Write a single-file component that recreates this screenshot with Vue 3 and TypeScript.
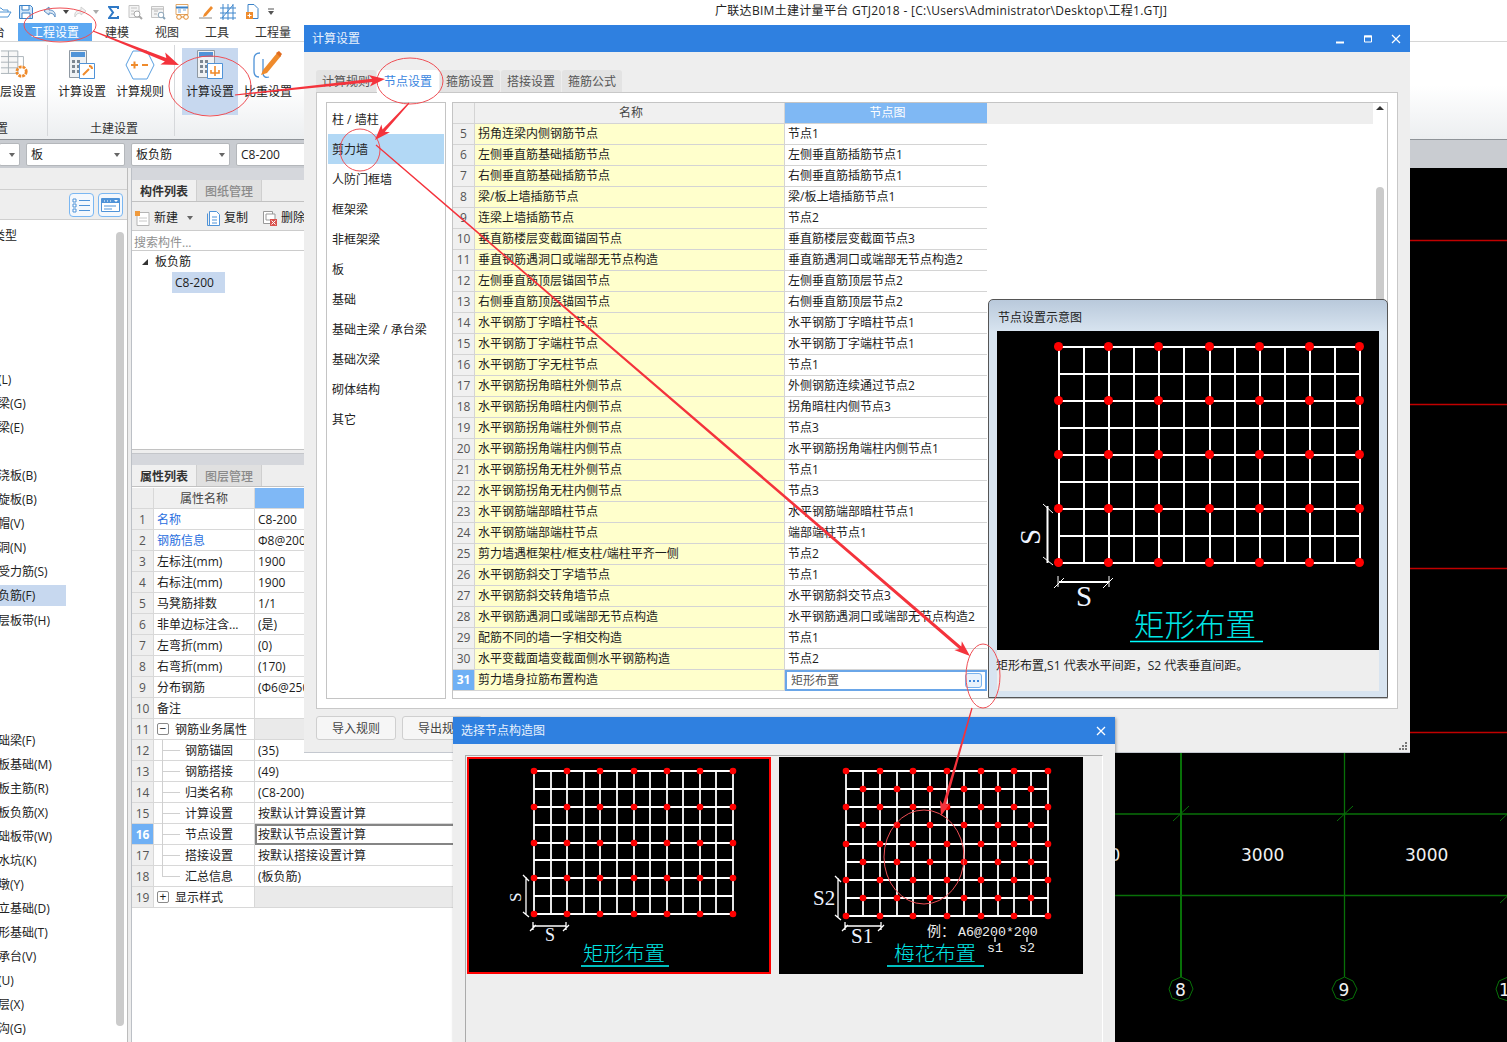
<script setup lang="ts">
interface NodeRow { no: number; name: string; value: string }
interface PropRow { no: number; name: string; value: string; level: number; link?: boolean; box?: string; active?: boolean; last?: boolean }

const tabsTop = ['建模', '视图', '工具', '工程量']
const navRows = [
  '类型', '', '', '', '', '', '(L)', '梁(G)', '梁(E)', '', '浇板(B)', '旋板(B)', '帽(V)', '洞(N)', '受力筋(S)', '负筋(F)', '层板带(H)',
  '', '', '', '', '础梁(F)', '板基础(M)', '板主筋(R)', '板负筋(X)', '础板带(W)', '水坑(K)', '墩(Y)', '立基础(D)', '形基础(T)', '承台(V)', '(U)', '层(X)', '沟(G)',
]
const sideItems = ['柱 / 墙柱', '剪力墙', '人防门框墙', '框架梁', '非框架梁', '板', '基础', '基础主梁 / 承台梁', '基础次梁', '砌体结构', '其它']
const dialogTabs = ['计算规则', '节点设置', '箍筋设置', '搭接设置', '箍筋公式']

const nodeRows: NodeRow[] = [
  { no: 5, name: '拐角连梁内侧钢筋节点', value: '节点1' },
  { no: 6, name: '左侧垂直筋基础插筋节点', value: '左侧垂直筋插筋节点1' },
  { no: 7, name: '右侧垂直筋基础插筋节点', value: '右侧垂直筋插筋节点1' },
  { no: 8, name: '梁/板上墙插筋节点', value: '梁/板上墙插筋节点1' },
  { no: 9, name: '连梁上墙插筋节点', value: '节点2' },
  { no: 10, name: '垂直筋楼层变截面锚固节点', value: '垂直筋楼层变截面节点3' },
  { no: 11, name: '垂直钢筋遇洞口或端部无节点构造', value: '垂直筋遇洞口或端部无节点构造2' },
  { no: 12, name: '左侧垂直筋顶层锚固节点', value: '左侧垂直筋顶层节点2' },
  { no: 13, name: '右侧垂直筋顶层锚固节点', value: '右侧垂直筋顶层节点2' },
  { no: 14, name: '水平钢筋丁字暗柱节点', value: '水平钢筋丁字暗柱节点1' },
  { no: 15, name: '水平钢筋丁字端柱节点', value: '水平钢筋丁字端柱节点1' },
  { no: 16, name: '水平钢筋丁字无柱节点', value: '节点1' },
  { no: 17, name: '水平钢筋拐角暗柱外侧节点', value: '外侧钢筋连续通过节点2' },
  { no: 18, name: '水平钢筋拐角暗柱内侧节点', value: '拐角暗柱内侧节点3' },
  { no: 19, name: '水平钢筋拐角端柱外侧节点', value: '节点3' },
  { no: 20, name: '水平钢筋拐角端柱内侧节点', value: '水平钢筋拐角端柱内侧节点1' },
  { no: 21, name: '水平钢筋拐角无柱外侧节点', value: '节点1' },
  { no: 22, name: '水平钢筋拐角无柱内侧节点', value: '节点3' },
  { no: 23, name: '水平钢筋端部暗柱节点', value: '水平钢筋端部暗柱节点1' },
  { no: 24, name: '水平钢筋端部端柱节点', value: '端部端柱节点1' },
  { no: 25, name: '剪力墙遇框架柱/框支柱/端柱平齐一侧', value: '节点2' },
  { no: 26, name: '水平钢筋斜交丁字墙节点', value: '节点1' },
  { no: 27, name: '水平钢筋斜交转角墙节点', value: '水平钢筋斜交节点3' },
  { no: 28, name: '水平钢筋遇洞口或端部无节点构造', value: '水平钢筋遇洞口或端部无节点构造2' },
  { no: 29, name: '配筋不同的墙一字相交构造', value: '节点1' },
  { no: 30, name: '水平变截面墙变截面侧水平钢筋构造', value: '节点2' },
]

const propRows: PropRow[] = [
  { no: 1, name: '名称', value: 'C8-200', level: 0, link: true },
  { no: 2, name: '钢筋信息', value: 'Φ8@200', level: 0, link: true },
  { no: 3, name: '左标注(mm)', value: '1900', level: 0 },
  { no: 4, name: '右标注(mm)', value: '1900', level: 0 },
  { no: 5, name: '马凳筋排数', value: '1/1', level: 0 },
  { no: 6, name: '非单边标注含...', value: '(是)', level: 0 },
  { no: 7, name: '左弯折(mm)', value: '(0)', level: 0 },
  { no: 8, name: '右弯折(mm)', value: '(170)', level: 0 },
  { no: 9, name: '分布钢筋', value: '(Φ6@250)', level: 0 },
  { no: 10, name: '备注', value: '', level: 0 },
  { no: 11, name: '钢筋业务属性', value: '', level: 0, box: '−' },
  { no: 12, name: '钢筋锚固', value: '(35)', level: 1 },
  { no: 13, name: '钢筋搭接', value: '(49)', level: 1 },
  { no: 14, name: '归类名称', value: '(C8-200)', level: 1 },
  { no: 15, name: '计算设置', value: '按默认计算设置计算', level: 1 },
  { no: 16, name: '节点设置', value: '按默认节点设置计算', level: 1, active: true },
  { no: 17, name: '搭接设置', value: '按默认搭接设置计算', level: 1 },
  { no: 18, name: '汇总信息', value: '(板负筋)', level: 1, last: true },
  { no: 19, name: '显示样式', value: '', level: 0, box: '+' },
]

function makeGrid(x0: number, x1: number, y0: number, y1: number, plum: boolean) {
  const xs = Array.from({ length: 13 }, (_, i) => Math.round(x0 + ((x1 - x0) * i) / 12))
  const ys = Array.from({ length: 9 }, (_, i) => Math.round(y0 + ((y1 - y0) * i) / 8))
  const dots: [number, number][] = []
  ys.forEach((y, r) => {
    xs.forEach((x, c) => {
      if (r % 2 === 0 && c % 2 === 0) dots.push([x, y])
      if (plum && r % 2 === 1 && c % 2 === 1) dots.push([x, y])
    })
  })
  return { xs, ys, dots, x0, x1, y0, y1 }
}

const bigGrid = makeGrid(1059, 1360, 347, 563, false)
const rectGrid = makeGrid(534, 733, 771, 914, false)
const plumGrid = makeGrid(846, 1048, 771, 916, true)

// tapered screen-capture arrows, page coordinates
function arrowPoints(x1: number, y1: number, x2: number, y2: number, w: number) {
  const len = Math.hypot(x2 - x1, y2 - y1)
  const ux = (x2 - x1) / len
  const uy = (y2 - y1) / len
  const nx = -uy
  const ny = ux
  const head = w * 4
  const bx = x2 - ux * head
  const by = y2 - uy * head
  const p = (x: number, y: number) => `${x.toFixed(1)},${y.toFixed(1)}`
  return [
    p(x1 + nx * 0.6, y1 + ny * 0.6),
    p(bx + (nx * w) / 2, by + (ny * w) / 2),
    p(bx - ux * 3 + nx * w * 1.8, by - uy * 3 + ny * w * 1.8),
    p(x2, y2),
    p(bx - ux * 3 - nx * w * 1.8, by - uy * 3 - ny * w * 1.8),
    p(bx - (nx * w) / 2, by - (ny * w) / 2),
    p(x1 - nx * 0.6, y1 - ny * 0.6),
  ].join(' ')
}

const arrows = [
  arrowPoints(93, 31, 179, 65, 3.6),
  arrowPoints(235, 95, 385, 79, 3.2),
  arrowPoints(409, 103, 375, 140, 3.2),
  arrowPoints(376, 145, 970, 656, 3.2),
  arrowPoints(972, 708, 941, 816, 3),
]
const rings = [
  { cx: 60, cy: 25, rx: 36, ry: 17 },
  { cx: 210, cy: 86, rx: 41, ry: 30 },
  { cx: 410, cy: 81, rx: 33, ry: 23 },
  { cx: 360, cy: 150, rx: 20, ry: 21 },
  { cx: 983, cy: 676, rx: 17, ry: 32 },
  { cx: 924, cy: 857, rx: 40, ry: 47 },
]
</script>

<template>
  <div class="app">
    <header class="quick">
      <div class="quick-icons">
        <svg class="qi" width="12" height="14" viewBox="0 0 12 14"><path d="M-4 3h5l2 2h5v2M-4 12l3-5h12l-3 5z" fill="none" stroke="#4f94d4" /></svg>
        <svg class="qi" width="14" height="14" viewBox="0 0 14 14" style="margin-left:7px"><path d="M.5.5h11l2 2v11H.5z" fill="#cfe4f8" stroke="#3b82c8" /><path d="M3 1v4h7V1M3 13V8h8v5" fill="#fff" stroke="#3b82c8" /></svg>
        <svg class="qi" width="14" height="13" viewBox="0 0 14 13" style="margin-left:10px"><path d="M6 1 1 5l5 4V7c3 0 5 1 6 4 1-5-2-7-6-7z" fill="#dbe8f5" stroke="#5b8fc4" /></svg>
        <span class="qcaret" />
        <svg class="qi" width="14" height="13" viewBox="0 0 14 13" style="margin-left:4px"><path d="M8 1l5 4-5 4V7C5 7 3 8 2 11 1 6 4 4 8 4z" fill="#f2f2f2" stroke="#d0d0d0" /></svg>
        <span class="qcaret light" />
        <svg class="qi" width="11" height="13" viewBox="0 0 11 13" style="margin-left:9px"><path d="M10 3V1H1l4 5.500L1 12h9v-2" fill="none" stroke="#2f79c6" stroke-width="2" /></svg>
        <svg class="qi" width="15" height="15" viewBox="0 0 15 15" style="margin-left:9px"><path d="M1 .5h10v12H1z" fill="#f4f4f4" stroke="#c4c4c4" /><path d="M3 3h6M3 6h3M3 9h3" stroke="#c4c4c4" /><circle cx="9" cy="9" r="3" fill="#fff" stroke="#a8a8a8" /><path d="m11 11 3 3" stroke="#a8a8a8" stroke-width="2" /></svg>
        <svg class="qi" width="15" height="15" viewBox="0 0 15 15" style="margin-left:8px"><path d="M.5 1.500h12v11H.5z" fill="#f4f4f4" stroke="#c4c4c4" /><path d="M.5 4h12M3 6h4M3 9h3" stroke="#b4b4b4" /><circle cx="10" cy="10" r="2.800" fill="#fff" stroke="#8aa4b8" /><path d="m12 12 2 2" stroke="#8aa4b8" stroke-width="2" /></svg>
        <svg class="qi" width="15" height="16" viewBox="0 0 15 16" style="margin-left:9px"><path d="M1 .5h12v10H1z" fill="#fff" stroke="#e2a868" /><path d="M1 3.500h12" stroke="#3b82c8" stroke-width="2" /><path d="M3 6h3M8 6h3M3 8h3" stroke="#7ba7d6" /><circle cx="4" cy="13" r="2.300" fill="none" stroke="#e08a2e" /><circle cx="11" cy="13" r="2.300" fill="none" stroke="#e08a2e" /><path d="M6 13h3" stroke="#e08a2e" /></svg>
        <svg class="qi" width="15" height="14" viewBox="0 0 15 14" style="margin-left:9px"><path d="m5 9 7-8 2 2-7 8-3 1z" fill="#ef8b2c" /><path d="M0 13h13" stroke="#888" /></svg>
        <svg class="qi" width="16" height="16" viewBox="0 0 16 16" style="margin-left:6px"><path d="M3 0v16M8 0v16M13 0v16M0 4h16M0 9h16M0 14h16M2 14 13 1" fill="none" stroke="#3f87cd" /></svg>
        <svg class="qi" width="14" height="16" viewBox="0 0 14 16" style="margin-left:9px"><path d="M3 .5h6l4 4v10H3z" fill="#fff" stroke="#3b82c8" /><path d="M1 8h7v7H1z" fill="#ef8b2c" /><path d="M4.500 9.500v4M2.500 11.500h4" stroke="#fff" /></svg>
        <svg class="qi" width="7" height="8" viewBox="0 0 7 8" style="margin-left:9px"><path d="M0 1h6" stroke="#555" /><path d="m0 3 3 4 3-4z" fill="#555" /></svg>
      </div>
      <div class="quick-title">广联达BIM土建计量平台 GTJ2018 - [C:\Users\Administrator\Desktop\工程1.GTJ]</div>
    </header>

    <nav class="menu-tabs">
      <span class="menu-cut">台</span>
      <span class="menu-on">工程设置</span>
      <span v-for="t in tabsTop" :key="t" class="menu-item">{{ t }}</span>
    </nav>

    <section class="ribbon">
      <div class="rb-group rb-first">
        <div class="rb-tools">
          <div class="rb-item rb-cut">
            <svg width="30" height="30" viewBox="0 0 30 32"><path d="M0 1h18v24H0M0 7h18M0 13h18M0 19h18M8 1v24" fill="#f7f7f7" stroke="#a9b1b8" /><path d="M18 7h6v10" fill="none" stroke="#a9b1b8" /><circle cx="22" cy="23" r="5" fill="none" stroke="#ef8b2c" stroke-width="3" stroke-dasharray="3 1" /></svg>
            <span>层设置</span>
          </div>
        </div>
        <div class="rb-label rb-label-cut">置</div>
      </div>
      <div class="rb-group rb-second">
        <div class="rb-tools">
          <div class="rb-item">
            <svg width="26" height="30" viewBox="0 0 26 30"><path d="M.5.500h17v27H.5z" fill="#eef1f4" stroke="#8f99a3" /><path d="M2 2h14v5H2z" fill="#4f93d8" /><path d="M3 10h3v3H3zM8 10h3v3H8zM3 15h3v3H3zM8 15h3v3H8zM3 20h3v3H3zM8 20h3v3H8z" fill="#7c8792" /><path d="M10.500 13.500h15v15h-15z" fill="#fff" stroke="#4f93d8" /><path d="m14 25 6-6m0-3a3 3 0 0 1 3 3" fill="none" stroke="#ef8b2c" stroke-width="2" /></svg>
            <span>计算设置</span>
          </div>
          <div class="rb-item">
            <svg width="30" height="30" viewBox="0 0 30 30"><path d="M8 1h14l7 14-7 14H8L1 15z" fill="#fff" stroke="#5a9fe0" /><path d="M6 15h7M9.500 11.500v7M17 15h6" stroke="#ef8b2c" stroke-width="2" /></svg>
            <span>计算规则</span>
          </div>
        </div>
        <div class="rb-label">土建设置</div>
      </div>
      <div class="rb-group rb-third">
        <div class="rb-tools">
          <div class="rb-item rb-on">
            <svg width="26" height="30" viewBox="0 0 26 30"><path d="M.5.500h17v27H.5z" fill="#eef1f4" stroke="#8f99a3" /><path d="M2 2h14v5H2z" fill="#4f93d8" /><path d="M3 10h3v3H3zM8 10h3v3H8zM3 15h3v3H3zM8 15h3v3H8zM3 20h3v3H3zM8 20h3v3H8z" fill="#7c8792" /><path d="M10.500 13.500h15v15h-15z" fill="#fff" stroke="#4f93d8" /><path d="M18 16v10M14 20v3h8v-3" fill="none" stroke="#ef8b2c" stroke-width="1.600" /></svg>
            <span>计算设置</span>
          </div>
          <div class="rb-item">
            <svg width="30" height="30" viewBox="0 0 30 30"><path d="M7 3C3 3 1 5 1 9v12c0 4 2 6 5 6M10 9v14c0 4 3 5 6 4" fill="none" stroke="#4f93d8" stroke-width="1.300" /><path d="m10 20 14-17 4 3-14 17-6 2z" fill="#ef8b2c" /><path d="m23 3 3-2 3 3-2 3z" fill="#e06b1f" /></svg>
            <span>比重设置</span>
          </div>
        </div>
        <div class="rb-label" />
      </div>
    </section>

    <section class="select-strip">
      <div class="sel sel-a"><span /><i /></div>
      <div class="sel"><span>板</span><i /></div>
      <div class="sel"><span>板负筋</span><i /></div>
      <div class="sel"><span>C8-200</span><i /></div>
    </section>

    <main class="work">
      <aside class="nav-col">
        <div class="nav-top" />
        <div class="nav-tools">
          <span class="nav-btn">
            <svg width="19" height="18" viewBox="0 0 19 18"><path d="M1 3h3v3H1zM1 8h3v3H1zM1 13h3v3H1z" fill="#fff" stroke="#4f93d8" /><path d="M7 4.500h11M7 9.500h11M7 14.500h11" stroke="#4f93d8" /></svg>
          </span>
          <span class="nav-btn">
            <svg width="19" height="18" viewBox="0 0 19 18"><path d="M.5 2.500h18v13H.5z" fill="#fff" stroke="#4f93d8" /><path d="M1 3h17v4H1z" fill="#4f93d8" /><path d="M3 5h1M6 5h1M9 5h1" stroke="#fff" /><path d="m13 4 2 2 2-2z" fill="#fff" /><path d="M3 10h12M3 13h8" stroke="#4f93d8" /></svg>
          </span>
        </div>
        <div class="nav-body">
          <ul class="nav-list">
            <li
              v-for="(row, i) in navRows"
              :key="i"
              :class="{ 'nav-on': i === 15, 'nav-head': i === 0 }"
            ><span>{{ row }}</span></li>
          </ul>
          <div class="nav-scroll" />
        </div>
      </aside>

      <div class="panels">
        <div class="panel-bar" />
        <div class="panel-tabs">
          <span class="ptab ptab-on">构件列表</span>
          <span class="ptab">图纸管理</span>
        </div>
        <div class="list-tools">
          <span class="tool">
            <svg width="15" height="15" viewBox="0 0 15 15"><path d="M2 1.500h12v13H2z" fill="#fff" stroke="#b5b5b5" /><path d="M4 7h8M4 10h8" stroke="#c8c8c8" /><path d="M0 0h5v5H0z" fill="#ef9a3d" /></svg>
            <b>新建</b><i class="tool-caret" />
          </span>
          <span class="tool">
            <svg width="13" height="15" viewBox="0 0 13 15"><path d="M2.500.5h7l3 3v11h-10z" fill="#fff" stroke="#4f93d8" /><path d="M.5 2.500v12h9" fill="none" stroke="#4f93d8" /><path d="M5 6h5M5 9h5M5 12h5" stroke="#4f93d8" /></svg>
            <b>复制</b>
          </span>
          <span class="tool">
            <svg width="14" height="15" viewBox="0 0 14 15"><path d="M.5.5h9v12h-9z" fill="#fff" stroke="#999" /><path d="M3 3h9v6H3z" fill="#fff" stroke="#999" /><path d="M7 8h7v7H7z" fill="#d9534f" /><path d="m8.500 9.500 4 4m0-4-4 4" stroke="#fff" /></svg>
            <b>删除</b>
          </span>
        </div>
        <div class="search">搜索构件...</div>
        <div class="tree">
          <div class="tree-root"><i class="tree-tri" />板负筋</div>
          <div class="tree-leaf">C8-200</div>
        </div>

        <div class="panel-bar second" />
        <div class="panel-tabs">
          <span class="ptab ptab-on">属性列表</span>
          <span class="ptab">图层管理</span>
        </div>
        <div class="props">
          <div class="prow phead">
            <span class="pno" />
            <span class="pname">属性名称</span>
            <span class="pval" />
          </div>
          <div v-for="row in propRows" :key="row.no" class="prow">
            <span class="pno" :class="{ 'pno-on': row.active }">{{ row.no }}</span>
            <span class="pname" :class="{ 'pname-link': row.link, 'pname-sub': row.level, 'pname-last': row.last }">
              <i v-if="row.box" class="pbox">{{ row.box }}</i>{{ row.name }}
            </span>
            <span class="pval" :class="{ 'pval-grey': row.box, 'pval-on': row.active }">{{ row.value }}</span>
          </div>
        </div>
      </div>

      <div class="canvas">
        <svg width="1027" height="874" viewBox="480 168 1027 874">
          <path d="M1100 240.500h407M1100 404.500h407M1100 568.500h407M1100 732.500h407" stroke="#c00000" stroke-width="1.600" />
          <path d="M1100 814h407M1100 895.500h407" stroke="#087008" stroke-width="1.500" />
          <path d="M1181 740v237" stroke="#087008" stroke-width="2" />
          <path d="M1344.500 740v237" stroke="#087008" stroke-width="1.300" />
          <path d="m1173 821 16-15m148 15 16-15m147 15 16-15m-16 97 16-15" stroke="#087008" />
          <polygon points="1181,977 1190,981 1193,989 1189,998 1181,1001 1172,998 1169,989 1172,981" fill="none" stroke="#087008" />
          <polygon points="1344.500,977 1353,981 1357,989 1353,998 1344.500,1001 1336,998 1332,989 1336,981" fill="none" stroke="#087008" />
          <polygon points="1508,977 1517,981 1520,989 1517,998 1508,1001 1499,998 1496,989 1499,981" fill="none" stroke="#087008" />
          <g class="cad-text">
            <text x="1077" y="861">3000</text>
            <text x="1241" y="861">3000</text>
            <text x="1405" y="861">3000</text>
            <text x="1175" y="996">8</text>
            <text x="1338.500" y="996">9</text>
            <text x="1499" y="996">10</text>
          </g>
        </svg>
      </div>
    </main>

    <!-- 计算设置 -->
    <section class="win win-calc">
      <div class="win-title">
        <span>计算设置</span>
        <div class="win-btns">
          <svg width="10" height="10" viewBox="0 0 10 10"><path d="M1 8.500h8" stroke="#fff" stroke-width="2" /></svg>
          <svg width="10" height="10" viewBox="0 0 10 10"><path d="M1.500 2h7v6h-7z" fill="none" stroke="#fff" /><path d="M1 2.500h8" stroke="#fff" stroke-width="2" /></svg>
          <svg width="10" height="10" viewBox="0 0 10 10"><path d="m1 1 8 8M9 1 1 9" stroke="#fff" stroke-width="1.200" /></svg>
        </div>
      </div>
      <div class="calc-body">
        <div class="dlg-tabs">
          <span v-for="t in dialogTabs" :key="t" class="dlg-tab" :class="{ 'dlg-tab-on': t === '节点设置' }">{{ t }}</span>
        </div>
        <div class="dlg-frame">
          <ul class="side">
            <li v-for="s in sideItems" :key="s" :class="{ 'side-on': s === '剪力墙' }">{{ s }}</li>
          </ul>
          <div class="grid-box">
            <div class="grid-scroll">
              <div class="grow ghead">
                <span class="gno" />
                <span class="gname">名称</span>
                <span class="gval">节点图</span>
                <span class="gfill" />
              </div>
              <div v-for="r in nodeRows" :key="r.no" class="grow">
                <span class="gno">{{ r.no }}</span>
                <span class="gname">{{ r.name }}</span>
                <span class="gval">{{ r.value }}</span>
              </div>
              <div class="grow gactive">
                <span class="gno">31</span>
                <span class="gname">剪力墙身拉筋布置构造</span>
                <span class="gval">矩形布置
                  <svg class="gmore" width="17" height="15" viewBox="0 0 17 15"><rect x=".5" y=".5" width="16" height="14" rx="2.500" fill="#e8f2fc" stroke="#78b2ee" /><path d="M4 8h2M8 8h2M12 8h2" stroke="#3f88dc" stroke-width="2" /></svg>
                </span>
              </div>
            </div>
            <div class="vbar">
              <i class="vbar-up" />
              <i class="vbar-thumb" />
            </div>
          </div>
        </div>
        <div class="dlg-foot">
          <button class="dlg-btn">导入规则</button>
          <button class="dlg-btn">导出规则</button>
        </div>
      </div>
      <svg class="grip" width="10" height="10" viewBox="0 0 10 10"><path d="M7 1h2v2H7zM4 4h2v2H4zM7 4h2v2H7zM1 7h2v2H1zM4 7h2v2H4zM7 7h2v2H7z" fill="#777" /></svg>

      <!-- 示意图浮层 -->
      <div class="hint">
        <div class="hint-title">节点设置示意图</div>
        <svg class="hint-pic" width="382" height="319" viewBox="997 331 382 319">
          <rect x="997" y="331" width="382" height="319" fill="#000" />
          <path v-for="x in bigGrid.xs" :key="'v' + x" :d="`M${x} ${bigGrid.y0}V${bigGrid.y1}`" stroke="#fff" stroke-width="2" />
          <path v-for="y in bigGrid.ys" :key="'h' + y" :d="`M${bigGrid.x0} ${y}H${bigGrid.x1}`" stroke="#fff" stroke-width="2" />
          <circle v-for="d in bigGrid.dots" :key="d.join()" :cx="d[0] - 0.500" :cy="d[1] - 0.500" r="4.500" fill="#f00" />
          <path d="M1043 504l10 9M1043 557l10 8M1058 576v11M1109 576v11M1054 588l10-10M1103 588l10-10" stroke="#fff" />
          <path d="M1047.500 506v57M1059 582h50" stroke="#fff" stroke-width="2" />
          <text class="dim" x="1040" y="545" font-size="29" transform="rotate(-90 1040 545)">S</text>
          <text class="dim" x="1076" y="606" font-size="29">S</text>
          <text class="pic-title" x="1134" y="636" font-size="30.500">矩形布置</text>
          <path d="M1130 641.500h133" stroke="#0ff" stroke-width="1.500" />
        </svg>
        <div class="hint-note">矩形布置,S1 代表水平间距，S2 代表垂直间距。</div>
      </div>
    </section>

    <!-- 选择节点构造图 -->
    <section class="win win-pick">
      <div class="win-title pick-title">
        <span>选择节点构造图</span>
        <svg width="10" height="10" viewBox="0 0 10 10"><path d="m1 1 8 8M9 1 1 9" stroke="#fff" stroke-width="1.300" /></svg>
      </div>
      <div class="pick-body">
        <div class="pick-frame">
          <svg class="pick-pic pick-on" width="304" height="217" viewBox="467 757 304 217">
            <rect x="467" y="757" width="304" height="217" fill="#000" />
            <path v-for="x in rectGrid.xs" :key="'v' + x" :d="`M${x} ${rectGrid.y0}V${rectGrid.y1}`" stroke="#fff" stroke-width="1.800" />
            <path v-for="y in rectGrid.ys" :key="'h' + y" :d="`M${rectGrid.x0} ${y}H${rectGrid.x1}`" stroke="#fff" stroke-width="1.800" />
            <circle v-for="d in rectGrid.dots" :key="d.join()" :cx="d[0]" :cy="d[1]" r="3.300" fill="#f00" />
            <path d="M526 877v37M523 875l6 6M523 912l6 5M533 926h33M533 922v8M566 922v8M530 931l6-6M563 931l6-6" stroke="#fff" stroke-width="1.300" />
            <text class="dim" x="521" y="902" font-size="17" transform="rotate(-90 521 902)">S</text>
            <text class="dim" x="545" y="941" font-size="18">S</text>
            <text class="pic-title" x="583" y="961" font-size="20.500">矩形布置</text>
            <path d="M581 966h88" stroke="#0ff" stroke-width="1.500" />
          </svg>
          <svg class="pick-pic" width="304" height="217" viewBox="779 757 304 217">
            <rect x="779" y="757" width="304" height="217" fill="#000" />
            <path v-for="x in plumGrid.xs" :key="'v' + x" :d="`M${x} ${plumGrid.y0}V${plumGrid.y1}`" stroke="#fff" stroke-width="1.800" />
            <path v-for="y in plumGrid.ys" :key="'h' + y" :d="`M${plumGrid.x0} ${y}H${plumGrid.x1}`" stroke="#fff" stroke-width="1.800" />
            <circle v-for="d in plumGrid.dots" :key="d.join()" :cx="d[0]" :cy="d[1]" r="3.300" fill="#f00" />
            <path d="M838 878v39M835 876l6 6M835 915l6 5M845 926h36M845 922v8M881 922v8M842 931l6-6M878 931l6-6M995 937v5M1027 937v5" stroke="#fff" stroke-width="1.300" />
            <text class="dim" x="813" y="905" font-size="21">S2</text>
            <text class="dim" x="851" y="943" font-size="21">S1</text>
            <text class="pic-note" x="927" y="936" font-size="14">例：</text>
            <text class="pic-mono" x="958" y="936" font-size="13.300">A6@200*200</text>
            <text class="pic-mono" x="987" y="952" font-size="13.300">s1</text>
            <text class="pic-mono" x="1019" y="952" font-size="13.300">s2</text>
            <text class="pic-title" x="894" y="961" font-size="20.500">梅花布置</text>
            <path d="M887 966h97" stroke="#0ff" stroke-width="1.500" />
          </svg>
        </div>
      </div>
    </section>

    <svg class="marks" width="1507" height="1042" viewBox="0 0 1507 1042">
      <ellipse v-for="r in rings" :key="r.cx" :cx="r.cx" :cy="r.cy" :rx="r.rx" :ry="r.ry" fill="none" stroke="#ef4f55" />
      <polygon v-for="a in arrows" :key="a" :points="a" fill="#f4333c" />
    </svg>
  </div>
</template>

<style>
body {
  background: #000;
}
</style>

<style scoped>
.app {
  position: relative;
  width: 1507px;
  height: 1042px;
  overflow: hidden;
  display: flex;
  flex-direction: column;
  background: #fff;
  color: #1c1c1c;
  font-family: "Open Sans", "Noto Sans CJK SC", sans-serif;
  font-size: 12px;
  line-height: 16px;
}

.quick {
  position: relative;
  height: 23px;
  display: flex;
  flex-shrink: 0;
}

.quick-icons {
  display: flex;
  align-items: center;
  height: 20px;
  padding-top: 2px;
}

.qi {
  flex-shrink: 0;
}

.qcaret {
  width: 0;
  height: 0;
  margin-left: 6px;
  border: 3px solid transparent;
  border-top: 4px solid #444;
  border-bottom: 0;
}

.qcaret.light {
  border-top-color: #aaa;
}

.quick-title {
  position: absolute;
  left: 715px;
  top: 3px;
  white-space: nowrap;
  letter-spacing: 0.3px;
  color: #222;
}

.menu-tabs {
  height: 18px;
  display: flex;
  align-items: center;
  flex-shrink: 0;
  border-bottom: 1px solid #d6d6d6;
  background: #fff;
}

.menu-cut {
  width: 18px;
  margin: 2px 0 0 -7px;
  flex-shrink: 0;
}

.menu-on {
  width: 74px;
  height: 18px;
  margin-left: 7px;
  margin-right: 13px;
  flex-shrink: 0;
  background: #5aa7f2;
  color: #fff;
  text-align: center;
  line-height: 20px;
}

.menu-item {
  flex-shrink: 0;
  margin: 2px 26px 0 0;
  color: #333;
}

.ribbon {
  height: 97px;
  display: flex;
  flex-shrink: 0;
  background: linear-gradient(#fff 45%, #eceef0 100%);
  border-bottom: 1px solid #8f9398;
}

.rb-group {
  display: flex;
  flex-direction: column;
  box-sizing: border-box;
  border-right: 1px solid #d6d8db;
  margin: 3px 0 3px;
  padding-top: 3px;
}

.rb-first {
  width: 48px;
  overflow: hidden;
}

.rb-second {
  width: 127px;
  padding-left: 6px;
}

.rb-third {
  width: 129px;
  padding-left: 7px;
  border-right: 0;
}

.rb-tools {
  display: flex;
  gap: 2px;
  height: 67px;
}

.rb-item {
  width: 56px;
  height: 67px;
  flex-shrink: 0;
  display: flex;
  flex-direction: column;
  align-items: center;
  padding-top: 2px;
  box-sizing: border-box;
}

.rb-item svg {
  flex-shrink: 0;
}

.rb-item span {
  margin-top: 4px;
  white-space: nowrap;
}

.rb-cut {
  width: 36px;
  align-items: flex-start;
}

.rb-on {
  background: #c7d8ef;
}

.rb-label {
  height: 16px;
  margin-top: 6px;
  text-align: center;
  color: #333;
}

.rb-label-cut {
  text-align: left;
  margin-left: -4px;
}

.select-strip {
  height: 28px;
  display: flex;
  gap: 6px;
  flex-shrink: 0;
  align-items: center;
  background: #c9ccd1;
}

.sel {
  width: 99px;
  height: 23px;
  flex-shrink: 0;
  box-sizing: border-box;
  display: flex;
  align-items: center;
  justify-content: space-between;
  padding: 2px 4px 0;
  background: #fff;
  border: 1px solid #b4b7bb;
  border-radius: 2px;
}

.sel-a {
  width: 21px;
  margin-left: -1px;
}

.sel i {
  width: 0;
  height: 0;
  border: 3px solid transparent;
  border-top: 4px solid #666;
  border-bottom: 0;
}

.work {
  flex: 1;
  min-height: 0;
  display: flex;
  background: #ececec;
}

.nav-col {
  width: 127px;
  flex-shrink: 0;
  display: flex;
  flex-direction: column;
  border-right: 1px solid #bcbcbc;
}

.nav-top {
  height: 21px;
  flex-shrink: 0;
  border-bottom: 1px solid #cfcfcf;
  background: #eeeeee;
}

.nav-tools {
  height: 29px;
  flex-shrink: 0;
  display: flex;
  justify-content: flex-end;
  align-items: center;
  gap: 4px;
  padding-right: 4px;
  border-bottom: 1px solid #cfcfcf;
  background: #eeeeee;
}

.nav-btn {
  width: 25px;
  height: 24px;
  box-sizing: border-box;
  display: flex;
  align-items: center;
  justify-content: center;
  border: 1px solid #7ab7f2;
  border-radius: 4px;
  background: #f4f8fd;
}

.nav-body {
  flex: 1;
  min-height: 0;
  display: flex;
  background: #fff;
}

.nav-list {
  width: 116px;
  flex-shrink: 0;
  margin: 0;
  padding: 4px 0 0;
  list-style: none;
  overflow: hidden;
}

.nav-list li {
  height: 24px;
  line-height: 24px;
  white-space: nowrap;
  margin-left: -2px;
  color: #222;
}

.nav-list .nav-head {
  margin-left: -7px;
}

.nav-list .nav-on span {
  display: block;
  width: 68px;
  height: 21px;
  line-height: 22px;
  margin-top: 1px;
  background: #c7d8ef;
}

.nav-scroll {
  width: 8px;
  height: 794px;
  margin-top: 12px;
  border-radius: 4px;
  background: #cbcbcb;
}

.panels {
  width: 349px;
  flex-shrink: 0;
  margin-left: 3px;
  display: flex;
  flex-direction: column;
  border-left: 1px solid #bcc0c6;
  box-sizing: border-box;
  background: #eeeeee;
}

.panel-bar {
  height: 12px;
  background: #d5d7dc;
  flex-shrink: 0;
}

.panel-bar.second {
  margin-top: 3px;
  height: 11px;
  border-top: 1px solid #c4c6ca;
  box-sizing: content-box;
}

.panel-tabs {
  height: 21px;
  display: flex;
  flex-shrink: 0;
  overflow: hidden;
  border-bottom: 1px solid #c2c2c2;
}

.ptab {
  width: 64px;
  text-align: center;
  line-height: 24px;
  background: #e0e0e0;
  color: #8a8a8a;
  font-weight: 500;
  border-right: 1px solid #cfcfcf;
}

.ptab-on {
  background: #f0f0f0;
  color: #333;
  font-weight: 700;
}

.list-tools {
  height: 29px;
  flex-shrink: 0;
  display: flex;
  align-items: center;
  padding: 4px 0 0 3px;
  box-sizing: border-box;
  border-bottom: 1px solid #cccccc;
}

.tool {
  display: flex;
  align-items: center;
  flex-shrink: 0;
  gap: 4px;
  margin-right: 15px;
}

.tool:first-child {
  margin-right: 16px;
}

.tool b {
  font-weight: 400;
}

.tool-caret {
  width: 0;
  height: 0;
  margin: 0 -2px 0 5px;
  border: 3px solid transparent;
  border-top: 4px solid #666;
  border-bottom: 0;
}

.search {
  height: 19px;
  line-height: 23px;
  flex-shrink: 0;
  overflow: hidden;
  padding-left: 2px;
  color: #8f8f8f;
  background: #fff;
  border-bottom: 1px solid #cccccc;
}

.tree {
  height: 199px;
  flex-shrink: 0;
  box-sizing: border-box;
  padding-top: 1px;
  background: #fff;
  border-bottom: 1px solid #c2c2c2;
}

.tree-root {
  display: flex;
  align-items: center;
  height: 20px;
  padding-left: 10px;
}

.tree-tri {
  width: 0;
  height: 0;
  margin-right: 7px;
  border-left: 6px solid transparent;
  border-bottom: 6px solid #333;
}

.tree-leaf {
  width: 53px;
  height: 21px;
  line-height: 22px;
  margin-left: 40px;
  box-sizing: border-box;
  padding-left: 3px;
  background: #c7d8ef;
}

.props {
  flex: 1;
  padding-top: 1px;
  background: #fff;
  overflow: hidden;
}

.prow {
  display: flex;
  height: 21px;
  line-height: 21px;
}

.pno {
  width: 21px;
  flex-shrink: 0;
  text-align: center;
  background: #eeeeee;
  border-right: 1px solid #d8d8d8;
  border-bottom: 1px solid #d8d8d8;
  color: #555;
}

.pno-on {
  background: #6fb0f5;
  color: #fff;
  font-weight: 700;
}

.pname {
  width: 101px;
  flex-shrink: 0;
  box-sizing: border-box;
  display: flex;
  align-items: center;
  padding-left: 3px;
  border-right: 1px solid #d8d8d8;
  border-bottom: 1px solid #d8d8d8;
  white-space: nowrap;
  position: relative;
}

.pname-link {
  color: #2a6fe0;
}

.pname-sub {
  padding-left: 31px;
}

.pname-sub::before {
  content: "";
  position: absolute;
  left: 8px;
  top: 0;
  width: 17px;
  height: 10px;
  border-left: 1px solid #d0d0d0;
  border-bottom: 1px solid #d0d0d0;
}

.pname-sub:not(.pname-last)::after {
  content: "";
  position: absolute;
  left: 8px;
  top: 10px;
  height: 11px;
  border-left: 1px solid #d0d0d0;
}

.pbox {
  width: 12px;
  height: 12px;
  box-sizing: border-box;
  margin-right: 6px;
  border: 1px solid #8a8a8a;
  border-radius: 2px;
  font-style: normal;
  line-height: 10px;
  text-align: center;
  flex-shrink: 0;
}

.pval {
  flex: 1;
  box-sizing: border-box;
  padding-left: 3px;
  border-bottom: 1px solid #d8d8d8;
  white-space: nowrap;
}

.pval-grey {
  background: #eaeaea;
}

.pval-on {
  border: 2px solid #858585;
  padding-left: 1px;
  line-height: 17px;
}

.phead .pname {
  justify-content: center;
  padding: 0;
  background: #f0f0f0;
  color: #444;
}

.phead .pval {
  background: #7fb8f6;
}

.canvas {
  flex: 1;
  min-width: 0;
  background: #000;
}

.canvas svg {
  display: block;
}

.cad-text {
  fill: #f2f2f2;
  font-family: "DejaVu Sans", sans-serif;
  font-size: 17px;
}

.win {
  position: absolute;
  display: flex;
  flex-direction: column;
  background: #eeeeee;
}

.win-calc {
  left: 304px;
  top: 25px;
  width: 1106px;
  height: 728px;
  border-bottom: 1px solid #c4c8cf;
  box-sizing: border-box;
}

.win-title {
  height: 27px;
  flex-shrink: 0;
  box-sizing: border-box;
  display: flex;
  align-items: center;
  justify-content: space-between;
  padding-left: 8px;
  background: #2f80e0;
  color: #e8f1fc;
}

.win-btns {
  display: flex;
  gap: 18px;
  padding-right: 9px;
}

.calc-body {
  flex: 1;
  min-height: 0;
  padding: 18px 12px 0;
  display: flex;
  flex-direction: column;
}

.dlg-tabs {
  height: 22px;
  display: flex;
  gap: 1px;
  flex-shrink: 0;
}

.dlg-tab {
  width: 60px;
  box-sizing: border-box;
  text-align: center;
  line-height: 23px;
  background: #e3e3e3;
  color: #555;
  border-radius: 3px 3px 0 0;
}

.dlg-tab-on {
  background: #fff;
  color: #3a86e0;
  width: 62px;
  margin-bottom: -1px;
  position: relative;
}

.dlg-frame {
  height: 617px;
  flex-shrink: 0;
  display: flex;
  gap: 6px;
  box-sizing: border-box;
  padding: 9px;
  background: #fff;
  border: 1px solid #c8c8c8;
}

.side {
  width: 120px;
  flex-shrink: 0;
  box-sizing: border-box;
  margin: 0;
  padding: 1px;
  list-style: none;
  border: 1px solid #c4c4c4;
}

.side li {
  height: 30px;
  line-height: 32px;
  padding-left: 4px;
  color: #222;
}

.side .side-on {
  background: #b2d8f5;
}

.grid-box {
  flex: 1;
  min-width: 0;
  display: flex;
  justify-content: space-between;
  box-sizing: border-box;
  border: 1px solid #c4c4c4;
}

.grid-scroll {
  width: 920px;
}

.grow {
  display: flex;
  height: 21px;
  line-height: 20px;
}

.gno {
  width: 22px;
  flex-shrink: 0;
  box-sizing: border-box;
  text-align: center;
  background: #f0f0f0;
  color: #555;
  border-right: 1px solid #d4d4d4;
  border-bottom: 1px solid #d4d4d4;
}

.gname {
  width: 310px;
  flex-shrink: 0;
  box-sizing: border-box;
  padding-left: 3px;
  background: #ffffcc;
  border-right: 1px solid #d4d4d4;
  border-bottom: 1px solid #d4d4d4;
  white-space: nowrap;
}

.gval {
  width: 202px;
  flex-shrink: 0;
  box-sizing: border-box;
  padding-left: 3px;
  background: #fff;
  border-bottom: 1px solid #d4d4d4;
  white-space: nowrap;
}

.ghead .gname {
  text-align: center;
  background: #f0f0f0;
  color: #444;
}

.ghead .gval {
  text-align: center;
  background: #7fb8f4;
  color: #fff;
}

.gfill {
  flex: 1;
  background: #eeeeee;
}

.gactive .gno {
  background: #6fb0f5;
  color: #fff;
  font-weight: 700;
}

.gactive .gval {
  display: flex;
  align-items: center;
  justify-content: space-between;
  padding: 0 3px 0 4px;
  border: 2px solid #6aa6e8;
  color: #555;
}

.gmore {
  display: block;
  flex-shrink: 0;
}

.vbar {
  width: 14px;
  flex-shrink: 0;
  position: relative;
}

.vbar-up {
  position: absolute;
  left: 3px;
  top: 3px;
  width: 0;
  height: 0;
  border: 4px solid transparent;
  border-bottom: 4px solid #333;
  border-top: 0;
}

.vbar-thumb {
  position: absolute;
  left: 3px;
  top: 84px;
  width: 8px;
  height: 300px;
  border-radius: 4px 4px 0 0;
  background: #cbcbcb;
}

.dlg-foot {
  display: flex;
  gap: 6px;
  margin-top: 7px;
}

.dlg-btn {
  width: 80px;
  height: 24px;
  font: inherit;
  color: #444;
  background: #f6f6f6;
  border: 1px solid #cfcfcf;
  border-radius: 3px;
  padding: 2px 0 0;
}

.grip {
  position: absolute;
  right: 2px;
  bottom: 1px;
}

.hint {
  position: absolute;
  left: 684px;
  top: 274px;
  width: 400px;
  height: 399px;
  box-sizing: border-box;
  padding: 0 8px 6px;
  display: flex;
  flex-direction: column;
  border: 1px solid #555;
  border-radius: 5px 5px 0 0;
  background: linear-gradient(#b9c9db, #d8e4f0 32px);
}

.hint-title {
  height: 31px;
  flex-shrink: 0;
  line-height: 36px;
  padding-left: 1px;
  color: #222;
}

.hint-pic {
  display: block;
  flex-shrink: 0;
}

.hint-note {
  flex: 1;
  background: #eeeeee;
  padding-top: 8px;
  text-indent: -1px;
  color: #222;
  white-space: nowrap;
}

.dim {
  fill: #eef4ff;
  font-family: "Liberation Serif", serif;
}

.pic-title {
  fill: #00e5e5;
  font-family: "Noto Sans CJK SC", sans-serif;
  font-weight: 300;
}

.pic-note {
  fill: #eee;
  font-family: "Noto Sans CJK SC", sans-serif;
}

.pic-mono {
  fill: #eee;
  font-family: "Liberation Mono", monospace;
}

.win-pick {
  left: 453px;
  top: 717px;
  width: 662px;
  height: 325px;
  box-shadow: 1px 1px 3px rgba(0, 0, 0, 0.35);
}

.pick-title {
  padding-right: 9px;
}

.pick-body {
  flex: 1;
  padding: 11px 12px 0 12px;
}

.pick-frame {
  height: 100%;
  display: flex;
  gap: 8px;
  box-sizing: border-box;
  padding: 1px 0 0 1px;
  border-top: 1px solid #aaaaaa;
  border-left: 1px solid #aaaaaa;
  border-right: 1px solid #fff;
}

.pick-pic {
  display: block;
  flex-shrink: 0;
}

.pick-on {
  outline: 2px solid #f00;
  outline-offset: -2px;
}

.marks {
  position: absolute;
  left: 0;
  top: 0;
  pointer-events: none;
}
</style>
